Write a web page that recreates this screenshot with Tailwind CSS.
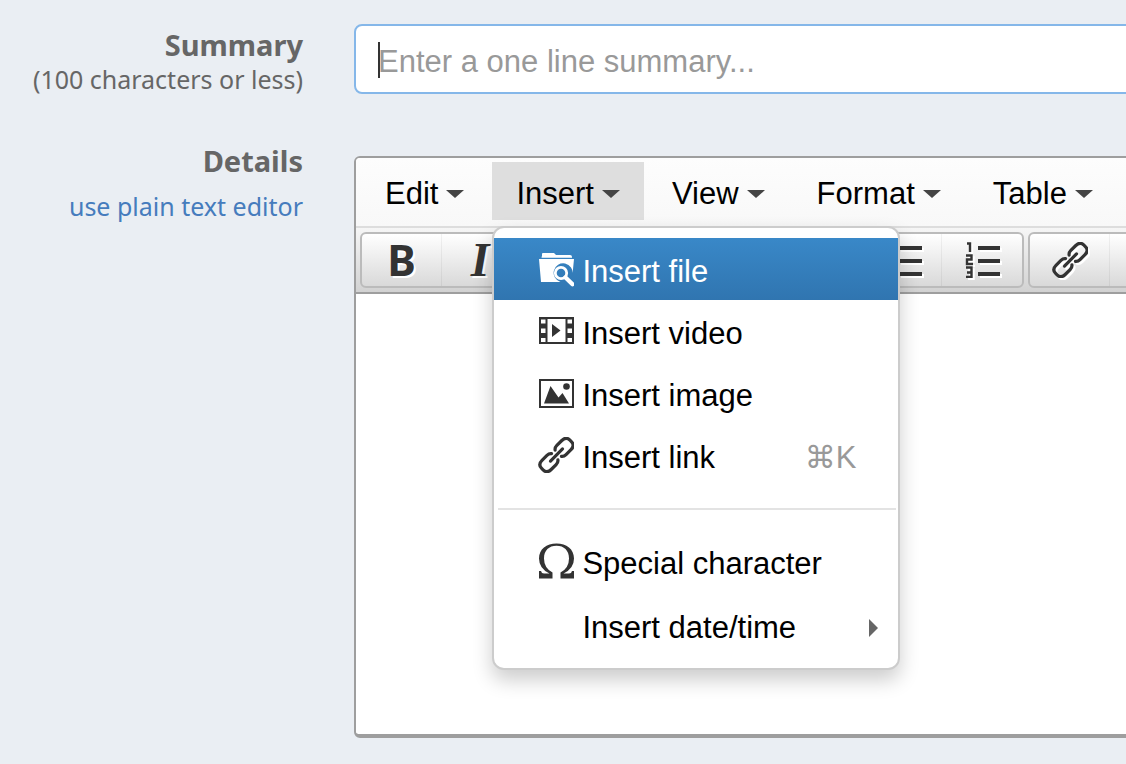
<!DOCTYPE html>
<html lang="en">
  <head>
    <meta charset="UTF-8" />
    <meta name="viewport" content="width=device-width, initial-scale=1.0" />
    <title>New request</title>
    <script src="https://cdn.jsdelivr.net/npm/@tailwindcss/browser@4"></script>
  </head>
  <body class="min-h-screen overflow-x-hidden bg-[#eaeef3] font-['Liberation_Sans',Arial,sans-serif] text-[31px] leading-9 text-black">
    <!-- Shared icons -->
    <svg class="hidden">
      <symbol id="icon-link" viewBox="0 0 36 36">
        <g transform="translate(18.500 18) rotate(-45)" fill="none" stroke="currentColor" stroke-width="3.200" stroke-linecap="round">
          <path d="M2.500 -4.500Q4 -6.500 7 -6.500H14Q20 -6.500 20 -1V1Q20 6.500 14 6.500H7Q4 6.500 2.500 4.500" />
          <path d="M-2.500 -4.500Q-4 -6.500 -7 -6.500H-14Q-20 -6.500 -20 -1V1Q-20 6.500 -14 6.500H-7Q-4 6.500 -2.500 4.500" />
          <path d="M-8.500 0H8.500" />
        </g>
      </symbol>
    </svg>

    <form class="grid grid-cols-[303px_1fr] gap-x-[51px] gap-y-[61px] pt-6">
      <!-- Summary -->
      <div class="text-right font-['Noto_Sans','Open_Sans',sans-serif] text-[#666]">
        <label for="summary" class="block pt-[3px] text-[29px] font-bold">Summary</label>
        <p class="text-[25px] leading-8">(100 characters or less)</p>
      </div>
      <div class="relative -mr-3">
        <input
          id="summary"
          type="text"
          placeholder="Enter a one line summary..."
          class="block h-[70px] w-full rounded-lg border-2 border-[#85b7e9] bg-white pt-[6px] pl-[22px] outline-none placeholder:text-[#999]"
        />
        <span class="absolute top-[18px] left-6 h-9 w-[2px] bg-[#333]"></span>
      </div>

      <!-- Details -->
      <div class="text-right font-['Noto_Sans','Open_Sans',sans-serif] text-[#666]">
        <label for="details" class="block text-[29px] leading-[10px] font-bold">Details</label>
        <a href="#" class="mt-6 inline-block text-[25px] leading-8 text-[#467cbd]">use plain text editor</a>
      </div>
      <div class="-mr-3 min-w-0 rounded-md border-2 border-b-4 border-[#9e9e9e] bg-white">
        <!-- Menu bar -->
        <div class="flex h-[70px] gap-1 rounded-t-sm border-b-2 border-[#ddd] bg-linear-to-b from-[#fdfdfd] to-[#f8f8f8] pt-1 pb-[6px] pl-[5px]">
          <button type="button" class="flex shrink-0 items-center gap-2 pt-[6px] pr-6 pl-6">
            Edit
            <svg class="h-2 w-[18px]" viewBox="0 0 18 8"><path d="M0 0h18L9 8z" fill="#444" /></svg>
          </button>
          <div class="relative flex shrink-0">
            <button type="button" class="flex items-center gap-2 bg-[#dedede] pt-[6px] pr-6 pl-6">
              Insert
              <svg class="h-2 w-[18px]" viewBox="0 0 18 8"><path d="M0 0h18L9 8z" fill="#444" /></svg>
            </button>

            <!-- Insert dropdown -->
            <div class="absolute top-full left-0 z-10 mt-[6px] w-[408px] rounded-xl border-2 border-[#ccc] bg-white pt-[10px] pb-3 shadow-[0_10px_20px_rgba(0,0,0,0.2)]">
              <button type="button" class="flex h-[62px] w-full items-center gap-2 bg-linear-to-b from-[#3988c8] to-[#3075b0] pl-11 text-white">
                <svg class="size-9" viewBox="0 0 36 36">
                  <path d="M4 4.500V3Q4 2 5 2h11l2 2h14q2 0 2 2v.8H3.500zM1 8h35l-1.500 15.500A9.500 9.500 0 1 0 22.500 31H3z" fill="#fff" />
                  <circle cx="23" cy="22" r="5.700" fill="none" stroke="#fff" stroke-width="2.800" />
                  <path d="M27.500 26.500l7 6.800" stroke="#fff" stroke-width="4.300" stroke-linecap="round" />
                </svg>
                <span class="pt-[6px]">Insert file</span>
              </button>
              <button type="button" class="flex h-[62px] w-full items-center gap-2 pl-11">
                <svg class="size-9" viewBox="0 0 36 36">
                  <path d="M1 4h35v27H1z" fill="#333" />
                  <path d="M9.500 6h18v23h-18zM3 6.500h4.500v4H3zM3 15.500h4.500v4.500H3zM3 25h4.500v4H3zM29.500 6.500H34v4h-4.500zM29.500 15.500H34v4.500h-4.500zM29.500 25H34v4h-4.500z" fill="#fff" />
                  <path d="M14 11v13l8.500-6.500z" fill="#333" />
                </svg>
                <span class="pt-[6px]">Insert video</span>
              </button>
              <button type="button" class="flex h-[62px] w-full items-center gap-2 pl-11">
                <svg class="size-9" viewBox="0 0 36 36">
                  <path d="M2 5h33v27H2z" fill="#fff" stroke="#333" stroke-width="2" />
                  <path d="M6 28.500l6.500-17.500 8 11.500 4-4.500 6.500 10.500z" fill="#333" />
                  <circle cx="28.500" cy="11.500" r="3.300" fill="#333" />
                </svg>
                <span class="pt-[6px]">Insert image</span>
              </button>
              <button type="button" class="flex h-[62px] w-full items-center gap-2 pr-[42px] pl-11">
                <svg class="size-9 text-[#333]"><use href="#icon-link" /></svg>
                <span class="pt-[6px]">Insert link</span>
                <span class="ml-auto pt-[6px] font-['Liberation_Sans','DejaVu_Sans',sans-serif] text-[#999]">⌘K</span>
              </button>
              <hr class="mt-[22px] mr-[2px] mb-5 ml-1 border-t-2 border-[#e3e3e3]" />
              <button type="button" class="flex h-[62px] w-full items-center gap-2 pl-11">
                <svg class="size-9" viewBox="0 0 36 36">
                  <path d="M1 28h2q.5 2.500 3 2.500h5.500Q1 25.500 1 15.500C1 6 8.500.5 18.500.5S36 6 36 15.500Q36 25.500 25.500 30.500h5.500q2.500 0 3-2.500h2v7.500H22.500V29.500Q31 25 31 15.500C31 7.500 26 2.800 18.500 2.800S6 7.500 6 15.500Q6 25 14.500 29.500v6H1z" fill="#333" />
                </svg>
                <span class="pt-[6px]">Special character</span>
              </button>
              <button type="button" class="mt-[2px] flex h-[62px] w-full items-center pr-5 pl-[88px]">
                <span class="pt-[6px]">Insert date/time</span>
                <svg class="mt-[6px] ml-auto h-[18px] w-[9px]" viewBox="0 0 9 18"><path d="M0 0v18l9-9z" fill="#666" /></svg>
              </button>
            </div>
          </div>
          <button type="button" class="flex shrink-0 items-center gap-2 pt-[6px] pr-6 pl-6">
            View
            <svg class="h-2 w-[18px]" viewBox="0 0 18 8"><path d="M0 0h18L9 8z" fill="#444" /></svg>
          </button>
          <button type="button" class="flex shrink-0 items-center gap-2 pt-[6px] pr-6 pl-6">
            Format
            <svg class="h-2 w-[18px]" viewBox="0 0 18 8"><path d="M0 0h18L9 8z" fill="#444" /></svg>
          </button>
          <button type="button" class="flex shrink-0 items-center gap-2 pt-[6px] pr-6 pl-6">
            Table
            <svg class="h-2 w-[18px]" viewBox="0 0 18 8"><path d="M0 0h18L9 8z" fill="#444" /></svg>
          </button>
        </div>

        <!-- Toolbar -->
        <div class="flex h-[66px] gap-1 overflow-hidden border-b-2 border-[#9e9e9e] bg-linear-to-b from-[#f6f6f6] to-[#d2d2d2] pt-1 pb-1 pl-1 text-[#333]">
          <div class="flex h-14 w-[664px] shrink-0 rounded-md border-2 border-[#bbb] bg-linear-to-b from-white to-[#d9d9d9]">
            <button type="button" class="w-20 border-r border-black/5 font-['Noto_Sans',sans-serif] text-[43px] leading-[48px] font-bold text-shadow-[2px_2px_0_#fff]">B</button>
            <button type="button" class="w-20 pr-1 font-['Liberation_Serif',serif] text-[48px] leading-[52px] font-bold italic text-shadow-[2px_2px_0_#fff]">I</button>
            <button type="button" aria-label="Bullet list" class="ml-auto flex w-20 items-center justify-center border-r border-black/5">
              <svg class="h-9 w-10 drop-shadow-[2px_2px_0_#fff]" viewBox="0 0 40 36">
                <path d="M17 4h23v4H17zM17 17h23v4H17zM17 30h23v4H17zM5 3h6v6H5zM5 16h6v6H5zM5 29h6v6H5z" fill="currentColor" />
              </svg>
            </button>
            <button type="button" aria-label="Numbered list" class="flex w-20 items-center justify-center">
              <svg class="size-9 drop-shadow-[2px_2px_0_#fff]" viewBox="0 0 36 36">
                <path d="M14 4h22v4H14zM14 17h22v4H14zM14 30h22v4H14z" fill="currentColor" />
                <path d="M3 1.500h3V10M2 13.500h5.500v4h-4.500v4.500H9M2 25.500h5.500V35H2M3 30.500h4.500" fill="none" stroke="currentColor" stroke-width="2.400" />
              </svg>
            </button>
          </div>
          <div class="flex h-14 w-[664px] shrink-0 rounded-md border-2 border-[#bbb] bg-linear-to-b from-white to-[#d9d9d9]">
            <button type="button" aria-label="Link" class="flex w-20 items-center justify-center border-r border-black/5">
              <svg class="size-9 drop-shadow-[2px_2px_0_#fff]"><use href="#icon-link" /></svg>
            </button>
          </div>
        </div>

        <!-- Text area -->
        <textarea id="details" class="block h-[440px] w-full resize-none px-6 py-4 outline-none"></textarea>
      </div>
    </form>
  </body>
</html>
